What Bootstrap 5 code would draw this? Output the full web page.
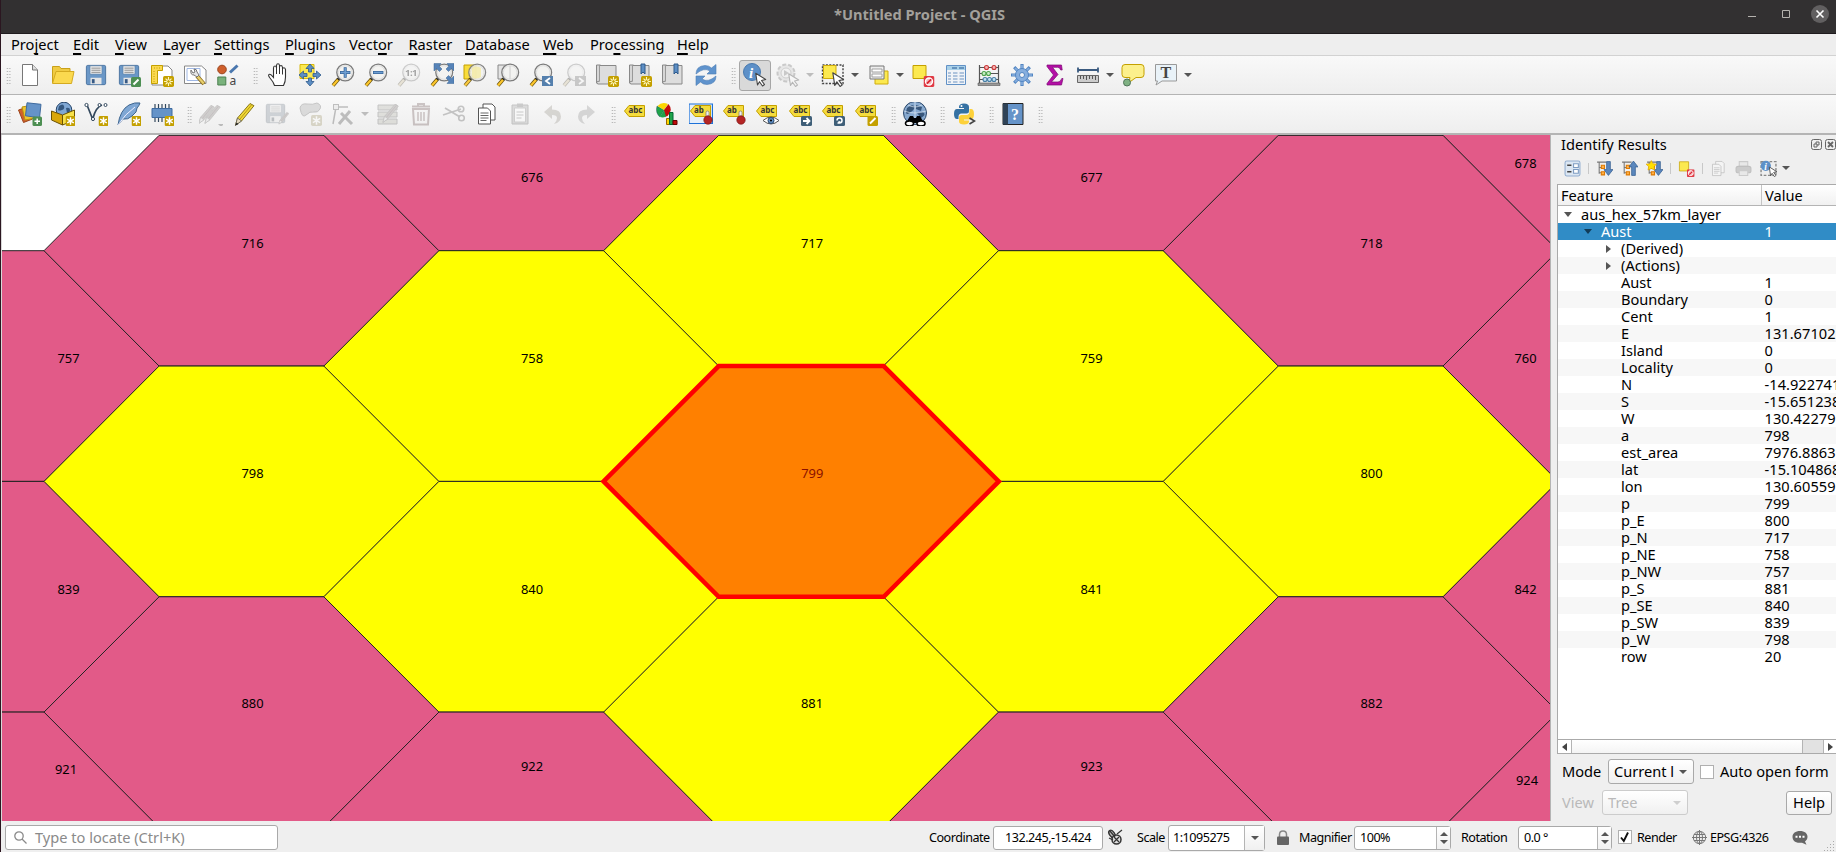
<!DOCTYPE html>
<html lang="en">
<head>
<meta charset="utf-8">
<title>*Untitled Project - QGIS</title>
<link href="https://cdn.jsdelivr.net/npm/bootstrap@5.3.0/dist/css/bootstrap.min.css" rel="stylesheet">
<script src="https://cdn.jsdelivr.net/npm/bootstrap@5.3.0/dist/js/bootstrap.bundle.min.js"></script>
<style>
body{width:1836px;height:852px;overflow:hidden;background:#efefef;color:#000;font-family:"Noto Sans","Open Sans",sans-serif;font-size:14.6px;line-height:17px;border-left:1px solid #2b1620}
.titlebar{height:34px;background:#323031;border-bottom:1px solid #1f1b1e;color:#a3a09b;font-weight:700;padding-bottom:5px}
.titlebar .lab{padding-top:1px}
.menus{height:22px;border-bottom:1px solid #d2d2d2;padding-left:10px;background:#eee}
.menus u{text-underline-offset:3px;text-decoration-thickness:1.5px;text-decoration-skip-ink:none}
.tools{height:39px;background:linear-gradient(#f9f9f9,#eee);border-bottom:1px solid #b4b4b4}
.tools.last-row{height:40px;border-bottom-width:2px}
.cell{width:33px;height:32px;flex:none;display:flex;align-items:center;justify-content:center}
.cell svg{width:24px;height:24px;overflow:visible}
.cell.pressed{width:32px;height:31px;margin-right:1px;background:#d9d9d9;border:1px solid #a6a6a6;border-radius:3px}
.cell.off{opacity:.34;filter:grayscale(.75)}
.drop{width:12px;flex:none;display:flex;padding-left:1px}
.drop::after,.tri{content:"";border:4px solid transparent;border-top:4.5px solid #555;border-bottom:0}
.drop.off{opacity:.35}
.grip{width:16px;flex:none;height:17px;display:flex;justify-content:flex-end;padding-right:3px}
.grip::after{content:"";width:5px;height:17px;background:radial-gradient(circle,#aaa 0.7px,transparent 0.9px) 0 0/2.6px 3px}
.grip.first{width:12.5px}
.mapview{width:1549px;height:686px;border-left:1px solid #d8d8d8;flex:none}
.side{width:286px;border-left:1px solid #b4b4b4;flex:none;overflow:hidden}
.mini .cell{width:25px;height:24px}
.mini .cell svg{width:17px;height:17px}
.sep{width:7px;display:flex;justify-content:center}
.sep::after{content:"";width:1px;height:11px;background:#c8c8c8}
.tree{margin-left:6px;width:300px;height:570px;border:1px solid #aaa;background:#fff}
.thead{height:21px;background:linear-gradient(#fff,#f1f1f1);border-bottom:1px solid #b4b4b4}
.thead div{padding:2px 0 0 3px}
.thead div:first-child{width:204px;border-right:1px solid #c4c4c4}
.trow{height:17px;display:flex;white-space:pre}
.trow:nth-child(even){background:#f7f7f7}
.trow.sel{background:#308cc6;color:#fff}
.trow .k{width:206.5px;flex:none;display:flex;align-items:center}
.trow .val{letter-spacing:.04px}
.tw{width:8px;margin-right:9px;display:flex;justify-content:center}
.tw i{border:4px solid transparent;border-top:5px solid #555;border-bottom:0}
.sel .tw i{border-top-color:#123c58}
.tw i.shut{border:4px solid transparent;border-left:5px solid #555;border-right:0}
.hscroll{height:14px;border-top:1px solid #aaa}
.hscroll div{height:13px}
.box{background:#fff;border:1px solid #a9a9a9;border-radius:3px;display:flex;align-items:center;flex:none}
.combo{background:linear-gradient(#fff,#f0f0f0);border:1px solid #a9a9a9;border-radius:3px;display:flex;align-items:center;flex:none}
.off-text{color:#b9b9b9}
.status{height:31px;font-size:12.6px;letter-spacing:-.5px;padding:2px 0 0 4px}
.status>*{flex:none}
.locator{font-size:14.6px;letter-spacing:0;color:#8a8a8a}
.spinb{width:14px;height:100%;border-left:1px solid #b4b4b4;background:linear-gradient(#fff,#f0f0f0);display:flex;flex-direction:column;align-items:center;justify-content:center;gap:4px;margin-left:auto}
.spinb i{border:4px solid transparent;border-top:4px solid #555;border-bottom:0}
.spinb i.up{transform:rotate(180deg)}
.chk{width:14px;height:14px;border:1px solid #b0b0b0;background:#fff;flex:none}
.lab{white-space:nowrap}
</style>
</head>
<body class="d-flex flex-column">
<svg width="0" height="0" class="position-absolute">
<defs>
<symbol id="star" viewBox="0 0 10 10"><rect width="10" height="10" rx="1.5" fill="#c4a000"/><path d="M5 1.2v7.6M1.7 3.1l6.6 3.8M8.3 3.1L1.7 6.9" stroke="#fff" stroke-width="1.4"/></symbol>
<symbol id="sun" viewBox="0 0 10 10"><rect width="10" height="10" rx="1.5" fill="#c4a000"/><path d="M5 1v8M1 5h8M2.3 2.3l5.4 5.4M7.7 2.3L2.3 7.7" stroke="#fff8c0" stroke-width="1"/><circle cx="5" cy="5" r="1.6" fill="#c4a000" stroke="#fff8c0" stroke-width=".8"/></symbol>
<symbol id="lens" viewBox="0 0 24 24"><path d="M7.5 16L2 22.5" stroke="#6b5510" stroke-width="3.6"/><path d="M7 16.8L2 22.4" stroke="#fcc62c" stroke-width="2.2"/><path d="M9 14.5l-2 2" stroke="#222" stroke-width="3"/><circle cx="14.2" cy="9.5" r="8.4" fill="#f3f3f1" stroke="#7c7c7c" stroke-width="1.3"/><circle cx="14.2" cy="9.5" r="6.8" fill="none" stroke="#dedede"/></symbol>
<symbol id="floppy" viewBox="0 0 24 24"><path d="M3 1.5h18q1.5 0 1.5 1.5v18q0 1.500-1.500 1.500H3q-1.500 0-1.500-1.500V3q0-1.500 1.500-1.500z" fill="#6a97c7" stroke="#46719f"/><path d="M5.500 2h13v9h-13z" fill="#eee" stroke="#55799f" stroke-width=".6"/><path d="M7 4.500h10M7 6.800h10M7 9.100h10" stroke="#888"/><path d="M6 15h12v7H6z" fill="#e6e6e6"/><path d="M7.500 16.500h3v4.500h-3z" fill="#375a86"/></symbol>
<symbol id="cur" viewBox="0 0 12 14"><path d="M.7.7l10 6.300-4.200 1 3 4-2 1.500-3-4.300-2 3.300z" fill="#fff" stroke="#444" stroke-width="1.100" stroke-linejoin="round"/></symbol>
<symbol id="tag" viewBox="0 0 24 24"><path d="M1.500 9L6 3.500h15.500v11H6z" fill="#f5dc3d" stroke="#c4a000"/><text x="5.500" y="11.300" font-size="8" font-weight="700" font-family="Noto Sans" fill="#333" textLength="14">abc</text></symbol>
<symbol id="tag2" viewBox="0 0 24 24"><path d="M1.500 9L6 3.500h15.500v11H6z" fill="#f5dc3d" stroke="#c4a000"/><text x="5" y="11.300" font-size="8" font-weight="700" font-family="Noto Sans" fill="#333">ab</text></symbol>
<symbol id="pin" viewBox="0 0 10 14"><rect x="3" y=".5" width="3" height="7" rx="1.500" fill="#eee" stroke="#777" stroke-width=".7"/><circle cx="5" cy="9.500" r="4.200" fill="#b52525" stroke="#7d1414" stroke-width=".7"/></symbol>
<symbol id="nosel" viewBox="0 0 10 10"><rect width="10" height="10" rx="1.500" fill="#e03a44"/><circle cx="5" cy="5" r="3.200" fill="#f6b9bd" stroke="#fff" stroke-width="1.200"/><path d="M3 7l4-4" stroke="#d8232f" stroke-width="1.500"/></symbol>
<symbol id="pencil" viewBox="0 0 24 24"><path d="M18 1.500l4 2.200L9.500 19l-6 4.200L5.500 16z" fill="#f0d838" stroke="#7c6a10" stroke-width=".9"/><path d="M19.800 2.600L7.500 17.600" stroke="#b89b14" stroke-width="1"/><path d="M5.500 16l4 3-6 4.200z" fill="#e8dcc0" stroke="#555" stroke-width=".7"/><path d="M4.500 20.500l2 1.400-3.200 1.800z" fill="#222"/></symbol>
<symbol id="darkpencil" viewBox="0 0 24 24"><path d="M18 1.500l4 2.200L9.500 19l-6 4.200L5.500 16z" fill="#a08080" stroke="#665" stroke-width=".9"/><path d="M19.800 2.600L7.500 17.600" stroke="#755" stroke-width="1"/><path d="M5.500 16l4 3-6 4.200z" fill="#ddd" stroke="#555" stroke-width=".7"/></symbol>
<symbol id="doc" viewBox="0 0 24 24"><path d="M1.500 2h4v18h-4z" fill="#d6d6d6" stroke="#888"/><path d="M4.500 2.500H21v18.500H3q-1.500-.5-1.500-2l3-1z" fill="#ddd" stroke="#888"/><path d="M4.500 2.500v16" stroke="#999"/></symbol>

<symbol id="new" viewBox="0 0 24 24"><path d="M4.500 1.500h10l5 5.500v15.500h-15z" fill="#fff" stroke="#777"/><path d="M14.500 1.500V7h5" fill="#ddd" stroke="#777"/></symbol>
<symbol id="open" viewBox="0 0 24 24"><path d="M1.500 20V3.500h7l1.500 2h9v3" fill="#f0cb43" stroke="#c9a11a"/><path d="M1.500 20.500L5 8.500h18L20.500 20.500z" fill="#fbd94f" stroke="#d4aa20"/></symbol>
<symbol id="save" viewBox="0 0 24 24"><use href="#floppy" x="1" y="0" width="22" height="24"/></symbol>
<symbol id="saveas" viewBox="0 0 24 24"><use href="#floppy" x="1" y="0" width="22" height="24"/><rect x="14" y="14" width="10" height="10" rx="1.500" fill="#4d8f53"/><path d="M16.500 21.500l5-5" stroke="#fff" stroke-width="2"/></symbol>
<symbol id="layout" viewBox="0 0 24 24"><path d="M2 3h16l4 4v15H2z" fill="#fff" stroke="#888"/><path d="M1.500 2.500h11v5h-5v13h-6z" fill="#fbd94f" stroke="#c4a000"/><path d="M4 5h7M4 8v11" stroke="#c4a000" stroke-dasharray="1 1.500"/><use href="#sun" x="13" y="13" width="11" height="11"/></symbol>
<symbol id="style" viewBox="0 0 24 24"><path d="M1.500 3h17l4.500 4v13.500H1.500z" fill="#fff" stroke="#888"/><path d="M4 5.500h13v12H4z" fill="none" stroke="#9fb7e4"/><path d="M14 13l7 8" stroke="#8a6b1c" stroke-width="4"/><path d="M14.500 13.500l6.200 7" stroke="#e8cf6c" stroke-width="2.400"/><path d="M8 7q-1 5 3 5l3 2 2-2-2-3q0-3-3-3l1 3-2 1z" fill="#e6e6e6" stroke="#777"/></symbol>
<symbol id="shapes" viewBox="0 0 24 24"><circle cx="6" cy="6.500" r="4.300" fill="#cf5f2c" stroke="#9b451d"/><path d="M14 9.500l7.500-7" stroke="#4a77ae" stroke-width="3"/><path d="M1.800 14h8v8h-8z" fill="#79b27c" stroke="#4a7f4e"/><text x="13.500" y="22" font-size="12" font-family="Noto Sans" fill="#444">a</text></symbol>
<symbol id="hand" viewBox="0 0 24 24"><path d="M8 22.500Q7 19 3.500 15q-2.200-3-1-3.600 1.500-.8 4.500 3V5q0-2 1.500-2t1.500 2V2.500Q10.200.8 11.500.8T13 2.500V4q.3-1.500 1.500-1.500T16 4.500V6q.3-1.300 1.400-1.300T19 6.500V14q0 5-2 8.500z" fill="#fff" stroke="#333" stroke-width="1.100" transform="translate(1.500 0)"/><path d="M11.500 5v6M14.500 4v7M17.500 6v5.500" stroke="#333"/></symbol>
<symbol id="pansel" viewBox="0 0 24 24"><path d="M2 1.500h14v14H2z" fill="#fce94f" stroke="#d8b90e"/><path d="M12 1l4 4.500h-2.500V9h-3V5.500H8zM12 23l4-4.500h-2.500V15h-3v3.500H8zM1 12l4.500-4v2.500H9v3H5.500V16zM23 12l-4.500-4v2.500H15v3h3.500V16z" fill="#5d8ec4" stroke="#2f5a8c" stroke-width=".8"/></symbol>
<symbol id="zin" viewBox="0 0 24 24"><use href="#lens" width="24" height="24"/><path d="M14.200 4.300v10.400M9 9.500h10.400" stroke="#38669a" stroke-width="3"/><path d="M14.200 5v9M9.700 9.500h9" stroke="#6f9fd2" stroke-width="1.500"/></symbol>
<symbol id="zout" viewBox="0 0 24 24"><use href="#lens" width="24" height="24"/><path d="M9 9.500h10.400" stroke="#38669a" stroke-width="3"/><path d="M9.700 9.500h9" stroke="#6f9fd2" stroke-width="1.500"/></symbol>
<symbol id="z11" viewBox="0 0 24 24"><use href="#lens" width="24" height="24"/><text x="8" y="13" font-size="9.500" font-weight="700" font-family="Noto Sans" textLength="12.500">1:1</text></symbol>
<symbol id="zfull" viewBox="0 0 24 24"><use href="#lens" width="24" height="24"/><path d="M4 .5h7L9 3l3 3-2.500 2.500-3-3L4 8zM24 .5h-7L19 3l-3 3 2.500 2.500 3-3L24 8zM24 20.500h-7l2-2.500-3-3 2.500-2.500 3 3 2.500-2.500z" fill="#5683b8" stroke="#3a6697" stroke-width=".5"/></symbol>
<symbol id="zsel" viewBox="0 0 24 24"><path d="M1 2h12v14H1z" fill="#f8dc3a" stroke="#c4a000"/><g opacity=".9"><use href="#lens" width="24" height="24"/></g><path d="M9 5q5-3 9 0v9q-5 3-9 0z" fill="#f4ea9a" opacity=".7"/></symbol>
<symbol id="zlay" viewBox="0 0 24 24"><path d="M2 2h12v14H2z" fill="#e4e4e4" stroke="#888"/><use href="#lens" width="24" height="24"/><path d="M14 3v13" stroke="#ccc"/></symbol>
<symbol id="zlast" viewBox="0 0 24 24"><use href="#lens" width="24" height="24"/><path d="M13 13h11v10H13z" fill="#5580ad"/><path d="M21 15l-4 3 4 3" stroke="#fff" stroke-width="1.800" fill="none"/></symbol>
<symbol id="znext" viewBox="0 0 24 24"><use href="#lens" width="24" height="24"/><path d="M13 13h11v10H13z" fill="#777"/><path d="M17 15l4 3-4 3" stroke="#fff" stroke-width="1.800" fill="none"/></symbol>
<symbol id="newmap" viewBox="0 0 24 24"><use href="#doc" width="24" height="24"/><use href="#sun" x="13" y="13" width="11" height="11"/></symbol>
<symbol id="bmnew" viewBox="0 0 24 24"><use href="#doc" width="24" height="24"/><path d="M13 1h4v10l-2-2-2 2z" fill="#5d8ec4" stroke="#2f5a8c"/><use href="#sun" x="13" y="13" width="11" height="11"/></symbol>
<symbol id="bm" viewBox="0 0 24 24"><use href="#doc" width="24" height="24"/><path d="M13 1h4v10l-2-2-2 2z" fill="#5d8ec4" stroke="#2f5a8c"/></symbol>
<symbol id="refresh" viewBox="0 0 24 24"><path d="M2 11Q2 3 11 2.500q4 0 6.500 2.500L22 1.500V11h-9l3-3q-6-4-14 3z" fill="#5f93cd" stroke="#4b7cb3" stroke-width=".6"/><path d="M22 13q0 8-9 8.500-4 0-6.500-2.500L2 22.500V13h9l-3 3q6 4 14-3z" fill="#5f93cd" stroke="#4b7cb3" stroke-width=".6"/></symbol>
<symbol id="ident" viewBox="0 0 24 24"><circle cx="9" cy="9" r="8.500" fill="#5d90c8" stroke="#4878ad"/><text x="6" y="14.500" font-size="15" font-style="italic" font-weight="700" font-family="Liberation Serif" fill="#fff">i</text><use href="#cur" x="12" y="9" width="12" height="15"/></symbol>
<symbol id="action" viewBox="0 0 24 24"><circle cx="10" cy="10" r="8.500" fill="#ccc" stroke="#777" stroke-width="2" stroke-dasharray="4 2"/><circle cx="10" cy="10" r="5" fill="#eee" stroke="#888"/><path d="M8 7l5 3-5 3z" fill="#777"/><use href="#cur" x="12" y="10" width="12" height="14"/></symbol>
<symbol id="selr" viewBox="0 0 24 24"><path d="M1.500 2h20.500v18.500H1.500z" fill="none" stroke="#444" stroke-width="1.400" stroke-dasharray="2 1.400"/><path d="M2.500 2.500h12.500v13h-12.500z" fill="#fce94f" stroke="#d0ac0c"/><use href="#cur" x="11" y="9" width="13" height="15"/></symbol>
<symbol id="self" viewBox="0 0 24 24"><path d="M9 8h13v13H9z" fill="#fce94f" stroke="#d0ac0c"/><path d="M4 3h14v13H4z" fill="#eee" stroke="#777"/><path d="M6 6h10v3H6zM6 11h10v3H6z" fill="#fff" stroke="#999" stroke-width=".9"/></symbol>
<symbol id="desel" viewBox="0 0 24 24"><path d="M2 2.500h13v13H2z" fill="#fce94f" stroke="#c4a000"/><use href="#nosel" x="12.500" y="13" width="11" height="11"/></symbol>
<symbol id="table" viewBox="0 0 24 24"><path d="M2.500 2.500h19v19h-19z" fill="#f0f3f7" stroke="#6191c6"/><path d="M3 3h18v4H3z" fill="#a8d0e8"/><path d="M8 5h5M15 5h5" stroke="#4f7fb0" stroke-width="1.400"/><path d="M4 10h3M9 10h4.500M15.500 10h4.500M4 13h3M9 13h4.500M15.500 13h4.500M4 16h3M9 16h4.500M15.500 16h4.500M4 19h3M9 19h4.500M15.500 19h4.500" stroke="#6c94c2" stroke-width="1.200"/></symbol>
<symbol id="abacus" viewBox="0 0 24 24"><path d="M2.500 2v18M21.500 2v18M2.500 4.500h19M2.500 10.500h19M2.500 16.500h19" stroke="#555" stroke-width="1.200"/><path d="M1 20h22v2.500H1z" fill="#999" stroke="#555" stroke-width=".6"/><g stroke-width="1.100"><g fill="#f6b3b3" stroke="#c93838"><circle cx="9.500" cy="4.500" r="2"/><circle cx="17" cy="4.500" r="2"/></g><g fill="#c7ecc7" stroke="#4ca34c"><circle cx="7" cy="10.500" r="2"/><circle cx="11.500" cy="10.500" r="2"/></g><g fill="#bfe0f2" stroke="#477ea5"><circle cx="8" cy="16.500" r="2"/><circle cx="12.500" cy="16.500" r="2"/><circle cx="17" cy="16.500" r="2"/></g></g></symbol>
<symbol id="gear" viewBox="0 0 24 24"><path d="M12 1v22M1 12h22M4.200 4.200l15.600 15.600M19.800 4.200L4.200 19.800" stroke="#5285c2" stroke-width="3.200"/><path d="M12 2v20M2 12h20M5 5l14 14M19 5L5 19" stroke="#86aede" stroke-width="1.700"/><circle cx="12" cy="12" r="6.500" fill="#86aede" stroke="#5285c2"/><circle cx="12" cy="12" r="2.500" fill="#f6f6f6" stroke="#5285c2"/></symbol>
<symbol id="sigma" viewBox="0 0 24 24"><path d="M4 2h14.500l.7 5h-1.500q-.7-2.700-3-2.700H9.500L15 11.500 8.500 19h6.500q2.500 0 3.800-3.500h1.200L18.500 22H4v-1.500L10.500 12 4 3.500z" fill="#b40fa6" stroke="#7c0b73" stroke-width=".7"/></symbol>
<symbol id="ruler" viewBox="0 0 24 24"><path d="M2 7h20M2 4.500v5M22 4.500v5" stroke="#3b5b80" stroke-width="1.800"/><path d="M1.500 12.500h21v7h-21z" fill="#ccc" stroke="#666"/><path d="M4.500 13v3M7.500 13v3M10.500 13v4M13.500 13v3M16.500 13v3M19.500 13v4" stroke="#555"/></symbol>
<symbol id="tip" viewBox="0 0 24 24"><path d="M4 1.500h16q3 0 3 3v7q0 3-3 3h-5l-7 5 1-5H4q-3 0-3-3v-7q0-3 3-3z" fill="#fcf08c" stroke="#c4a000"/><circle cx="6" cy="19.500" r="3.500" fill="#7fb183" stroke="#51755a"/></symbol>
<symbol id="textann" viewBox="0 0 24 24"><path d="M1.500 1.500h21V18H8l-6 4 1.500-4h-2z" fill="#e9f2f8" stroke="#999"/><text x="6.500" y="15" font-size="16" font-family="Liberation Serif" font-weight="700" fill="#444">T</text></symbol>

<symbol id="layers" viewBox="0 0 24 24"><path d="M.5 8l9-3 5 12-9 3.500z" fill="#cf5f2c" stroke="#9b451d"/><path d="M4 5l11-2 3 13-11 2z" fill="#edc531" stroke="#b9920d"/><path d="M9 .800l14 1.500-1.500 13.500-14-2z" fill="#6593c8" stroke="#3f6b9f"/><rect x="14.500" y="14.500" width="9.500" height="9.500" rx="1.500" fill="#4d8f53"/><path d="M19.200 16.500v5.500M16.500 19.200h5.500" stroke="#fff" stroke-width="1.500"/></symbol>
<symbol id="gpkg" viewBox="0 0 24 24"><circle cx="13" cy="8" r="7.800" fill="#7fa7d4" stroke="#27466b"/><path d="M8 4q4-3 5 0t-2 4-4 0zM15 6q4-1 4 2t-3 3z" fill="#34577f"/><path d="M.5 9l11 4v10l-11-5z" fill="#d9a70a" stroke="#6b5204"/><path d="M11.500 13L23.500 8v10l-12 5z" fill="#f7e14b" stroke="#6b5204"/><use href="#star" x="14.500" y="14" width="10" height="10"/></symbol>
<symbol id="vec" viewBox="0 0 24 24"><path d="M3 3l6 15M9 16q3-11 9-13" stroke="#34495e" stroke-width="1.700" fill="none"/><g fill="#fff" stroke="#34495e"><circle cx="2.500" cy="3" r="1.600"/><circle cx="9" cy="17" r="1.600"/><circle cx="15.500" cy="3" r="1.500"/><circle cx="21.500" cy="3" r="1.500"/></g><use href="#star" x="14.500" y="14" width="10" height="10"/></symbol>
<symbol id="feather" viewBox="0 0 24 24"><path d="M1 23Q3 8 12 3q6-3 11-2-1 3-3 5l-1 4-4 4q-4 4-9 3z" fill="#7fa7d4" stroke="#3d658f"/><path d="M1 23Q8 12 18 5" stroke="#eef" fill="none"/><use href="#star" x="14.500" y="14" width="10" height="10"/></symbol>
<symbol id="chip" viewBox="0 0 24 24"><path d="M5 2v18M8.500 2v18M12 2v18M15.500 2v14M19 2v14" stroke="#34495e" stroke-width="1.200"/><path d="M2 6.500h20v9H2z" fill="#6593c8" stroke="#3f6b9f"/><use href="#star" x="14.500" y="14" width="10" height="10"/></symbol>
<symbol id="pencils" viewBox="0 0 24 24"><use href="#darkpencil" x="-3" y="0" width="20" height="24"/><use href="#darkpencil" x="3" y="0" width="20" height="24"/><path d="M19 22h6l-3 3z" fill="#555"/></symbol>
<symbol id="savee" viewBox="0 0 24 24"><use href="#floppy" x="0" y="1" width="21" height="21"/><use href="#darkpencil" x="12" y="9" width="13" height="14"/></symbol>
<symbol id="blob" viewBox="0 0 24 24"><path d="M2 6q1-5 7-4t10-1q5 2 3 6t-6 3-8 3-6-7z" fill="#aaa" stroke="#666"/><use href="#star" x="13" y="13" width="11" height="11"/></symbol>
<symbol id="vtx" viewBox="0 0 24 24"><path d="M5 5L2 22M5 5h12" stroke="#555" stroke-width="1.500"/><rect x="2.500" y="2.500" width="5" height="5" fill="#ddd" stroke="#555"/><path d="M10 11l11 11M19 9L8 22" stroke="#555" stroke-width="3"/></symbol>
<symbol id="attr" viewBox="0 0 24 24"><path d="M2 3h19v5H2zM2 10h19v5H2zM2 17h19v5H2z" fill="#b9b994" stroke="#666"/><use href="#darkpencil" x="4" y="0" width="20" height="22"/></symbol>
<symbol id="trash" viewBox="0 0 24 24"><path d="M4 7h16l-1 15.500H5zM3 4.500h18M9 4V2h6v2" fill="none" stroke="#a55" stroke-width="2"/><path d="M9 10v9M12 10v9M15 10v9" stroke="#a55" stroke-width="1.500"/></symbol>
<symbol id="cut" viewBox="0 0 24 24"><path d="M1 13L19 7M3 6l15 9" stroke="#666" stroke-width="1.800"/><circle cx="19" cy="7" r="2.800" fill="none" stroke="#666" stroke-width="1.600"/><circle cx="19.500" cy="16" r="2.800" fill="none" stroke="#666" stroke-width="1.600"/></symbol>
<symbol id="copy" viewBox="0 0 24 24"><path d="M8 2h9l3 3v13H8z" fill="#fff" stroke="#555"/><path d="M3.500 6h9l3 3v13h-12z" fill="#fff" stroke="#555"/><path d="M5.500 11h8M5.500 13.500h8M5.500 16h8M5.500 18.500h6" stroke="#666"/></symbol>
<symbol id="paste" viewBox="0 0 24 24"><path d="M4 3h16v19H4z" fill="#aaa" stroke="#666"/><path d="M6.500 6h11v14h-11z" fill="#fff" stroke="#888"/><path d="M9 1.500h6V5H9z" fill="#777"/><path d="M8.500 10h7M8.500 13h7M8.500 16h5" stroke="#777"/></symbol>
<symbol id="undo" viewBox="0 0 24 24"><path d="M3 10l8-7v4.500q9 0 9 7 0 6-7 7.500 3-3 3-6t-5-3V17z" fill="#a97"/></symbol>
<symbol id="redo" viewBox="0 0 24 24"><path d="M21 10l-8-7v4.500q-9 0-9 7 0 6 7 7.500-3-3-3-6t5-3V17z" fill="#999"/></symbol>
<symbol id="pie" viewBox="0 0 24 24"><path d="M8 8L1 4Q-1 11 4 15z" fill="#1fa34a" stroke="#115"  stroke-width=".3"/><path d="M8 8L1.500 4Q6-1 12 2z" fill="#fbd500"/><path d="M8 8l4.500-6q5 6-1 12l-3 1z" fill="#c00a0a"/><path d="M8 8l-4 7q3 1 6-.5z" fill="#1fa34a"/><path d="M10.500 16.500h3v6h-3z" fill="#fbd500" stroke="#960"/><path d="M13.500 10.500h3.500v12h-3.500z" fill="#1fa34a" stroke="#063"/><path d="M17 18.500h4v4h-4z" fill="#c00a0a" stroke="#600"/></symbol>
<symbol id="lab1" viewBox="0 0 24 24"><use href="#tag" width="24" height="24"/></symbol>
<symbol id="lab2" viewBox="0 0 24 24"><path d="M0 2h23.500v19.500H0z" fill="#e4eefa" stroke="#1c71d8" stroke-width="1.200"/><use href="#tag2" width="24" height="24"/><use href="#pin" x="14" y="8" width="10" height="15"/></symbol>
<symbol id="lab3" viewBox="0 0 24 24"><use href="#tag2" width="24" height="24"/><use href="#pin" x="14" y="8" width="10" height="15"/></symbol>
<symbol id="lab4" viewBox="0 0 24 24"><use href="#tag" width="24" height="24"/><path d="M8 18.500q8-7 16 0-8 7-16 0z" fill="#fff" stroke="#555"/><circle cx="16" cy="18.500" r="3" fill="#6593c8" stroke="#27466b"/><circle cx="16" cy="18.500" r="1"/></symbol>
<symbol id="lab5" viewBox="0 0 24 24"><use href="#tag" width="24" height="24"/><rect x="13" y="14" width="11" height="10" rx="1.500" fill="#3f5f78"/><path d="M15 19h6M18.500 16l3 3-3 3" stroke="#fff" stroke-width="1.800" fill="none"/></symbol>
<symbol id="lab6" viewBox="0 0 24 24"><use href="#tag" width="24" height="24"/><rect x="13" y="14" width="11" height="10" rx="1.500" fill="#3f5f78"/><path d="M16 18.500q0-2.500 2.500-2.500t2.500 2.500-2.500 2.500h-2M20 21l-2.500-1.500" stroke="#fff" stroke-width="1.500" fill="none"/></symbol>
<symbol id="lab7" viewBox="0 0 24 24"><use href="#tag" width="24" height="24"/><rect x="13.500" y="14" width="10.500" height="10" rx="1.500" fill="#c4a000"/><path d="M16 21.500l5.500-5.500" stroke="#fff" stroke-width="2"/></symbol>
<symbol id="csw" viewBox="0 0 24 24"><circle cx="12" cy="11" r="11.500" fill="#87a9cf" stroke="#2a4668"/><path d="M4 6q5-4 7-2t-3 6-5 0zM13 3l6 2-1 4-5-2zM14 11q5-2 7 0t-3 5z" fill="#38577c"/><path d="M12 0v22M1 9q11 4 22 0M5 3q7 4 14 0" stroke="#dde8f4" fill="none" stroke-width=".7"/><path d="M3 21l4-7h3l1 2h2l1-2h3l4 7z" fill="#000"/><ellipse cx="6.500" cy="21.500" rx="4" ry="2.500" fill="#fff" stroke="#000" stroke-width="1.600"/><ellipse cx="18" cy="21.500" rx="4" ry="2.500" fill="#fff" stroke="#000" stroke-width="1.600"/></symbol>
<symbol id="python" viewBox="0 0 24 24"><path d="M7 5q0-3.500 5-3.500t5 3.500v4q0 2.500-2.500 2.500h-5Q6.500 11.500 6.500 15v2H5q-3 0-3-5t3-5h7V6H7z" fill="#3571a3"/><circle cx="9.500" cy="4" r="1" fill="#fff"/><path d="M17.500 7H19q3 0 3 5t-3 5.500h-7v1h5v1q0 3-5 3t-5-3v-4Q7 13 9.500 13h5q3 0 3-4z" fill="#fdd13b"/><path d="M17.500 16l5 3-5 3" stroke="#444" stroke-width="1.600" fill="none"/></symbol>
<symbol id="help" viewBox="0 0 24 24"><path d="M2 1.500h20v21H2z" fill="#6593c8" stroke="#222"/><path d="M2 1.500h5v21H2z" fill="#2f4256"/><text x="10" y="17.500" font-size="16" font-family="Liberation Serif" font-weight="700" fill="#fff">?</text></symbol>

<symbol id="p-form" viewBox="0 0 16 16"><rect x="1" y="1" width="14" height="14" rx="1.500" fill="#dbe6f2" stroke="#93aed0"/><path d="M3 5h4M3 11h4" stroke="#444" stroke-width="1.300"/><path d="M9 3.500h4.500v3.500H9zM9 9h4.500v3.500H9z" fill="#fff" stroke="#7e9cc2"/></symbol>
<symbol id="p-base" viewBox="0 0 16 16"><path d="M1 2h9M3 2v11M3 7h4M3 12h4" stroke="#777" fill="none"/><path d="M5 5h3v3H5zM5 11h3v3H5z" fill="#ffb04a" stroke="#e07b00"/></symbol>
<symbol id="p-exp" viewBox="0 0 16 16"><use href="#p-base" width="16" height="16"/><path d="M10 1.500h3.500V9H16l-4.300 5.500L7.500 9H10z" fill="#5b87bd" stroke="#355f90" stroke-width=".7"/></symbol>
<symbol id="p-col" viewBox="0 0 16 16"><use href="#p-base" width="16" height="16"/><path d="M10 14.500h3.500V6.500H16L11.700 1 7.500 6.500H10z" fill="#5b87bd" stroke="#355f90" stroke-width=".7"/></symbol>
<symbol id="p-new" viewBox="0 0 16 16"><use href="#p-exp" width="16" height="16"/><path d="M5 .5l1.500 3 3.500.4-2.500 2.300.6 3.300L5 8 1.900 9.500l.6-3.300L0 3.900l3.500-.4z" fill="#ffe100" stroke="#e0a000" stroke-width=".6"/></symbol>
<symbol id="p-print" viewBox="0 0 16 16"><path d="M4 1.500h8V6H4z" fill="#ddd" stroke="#888"/><rect x="1" y="6" width="14" height="6" rx="2" fill="#888" stroke="#666"/><path d="M4 10h8v4.500H4z" fill="#ddd" stroke="#888"/></symbol>
<symbol id="p-id" viewBox="0 0 16 16"><path d="M1 1.500h14v13H1z" fill="none" stroke="#888" stroke-width="1.300" stroke-dasharray="2.500 1.500"/><circle cx="5.500" cy="5.500" r="4.800" fill="#5d90c8"/><text x="4" y="9" font-size="9" font-style="italic" font-weight="700" font-family="Liberation Serif" fill="#fff">i</text><use href="#cur" x="8" y="6" width="9" height="10"/></symbol>
</defs>
</svg>

<header class="titlebar d-flex align-items-center flex-shrink-0">
  <div class="lab" style="margin-left:833px;width:170px">*Untitled Project - QGIS</div>
  <svg class="ms-auto" width="92" height="26" viewBox="0 0 92 26" fill="none" stroke="#b5b2ae"><path d="M4 15.500h8"/><path d="M38.500 9.500h7v7h-7z"/><circle cx="76" cy="13" r="9" fill="#615f60" stroke="none"/><path d="M72.500 9.500l7 7M79.500 9.500l-7 7" stroke="#fff" stroke-width="1.600"/></svg>
</header>
<nav class="menus d-flex align-items-center flex-shrink-0" id="menus"></nav>
<div class="tools d-flex align-items-center flex-shrink-0" id="tb1"></div>
<div class="tools last-row d-flex align-items-center flex-shrink-0" id="tb2"></div>

<main class="d-flex flex-shrink-0">
  <svg class="mapview" id="map" viewBox="2 135 1548 686" font-family="Noto Sans" font-size="12.900" text-anchor="middle"></svg>
  <aside class="side">
    <div class="d-flex align-items-center" style="height:19px;padding-left:10px"><span class="lab">Identify Results</span>
      <svg class="ms-auto" width="25" height="12" viewBox="0 0 25 12" fill="none" stroke="#666"><rect x=".5" y=".5" width="10" height="10" rx="2"/><path d="M3 5h3v3H3zM5 5V3h3v3H6"/><rect x="14.500" y=".5" width="10" height="10" rx="2"/><path d="M17 3l5 5M22 3l-5 5" stroke-width="1.800"/></svg></div>
    <div class="mini d-flex align-items-center" style="height:30px;padding:0 0 2px 9px" id="mini"></div>
    <div class="tree">
      <div class="thead d-flex"><div>Feature</div><div>Value</div></div>
      <div id="rows" style="height:533px"></div>
      <div class="hscroll d-flex"><div style="width:14px;border-right:1px solid #b4b4b4" class="d-flex align-items-center justify-content-center"><svg width="5" height="8"><path d="M5 0v8L0 4z" fill="#444"/></svg></div><div style="width:231px;border-right:1px solid #b4b4b4;background:linear-gradient(#fff,#f4f4f4)"></div><div style="width:21px;background:#e2e2e2;border-right:1px solid #b4b4b4"></div><div class="d-flex align-items-center ps-1"><svg width="5" height="8"><path d="M0 0v8l5-4z" fill="#444"/></svg></div></div>
    </div>
    <div class="d-flex align-items-center" style="margin-top:5px;height:25px;padding-left:11px">
      <span class="lab" style="width:46px">Mode</span>
      <div class="combo" style="width:86px;height:25px;padding:0 6px 0 5px">Current l<i class="tri ms-auto"></i></div>
      <div class="chk" style="margin:0 6px"></div><span class="lab">Auto open form</span>
    </div>
    <div class="d-flex align-items-center off-text" style="margin-top:6px;height:25px;padding-left:11px">
      <span class="lab" style="width:40px">View</span>
      <div class="combo" style="width:86px;height:25px;padding:0 6px 0 5px;border-color:#ccc">Tree<i class="tri ms-auto opacity-25"></i></div>
      <div class="combo text-black justify-content-center" style="width:46px;height:24px;margin-left:98px">Help</div>
    </div>
  </aside>
</main>

<footer class="status d-flex align-items-center flex-shrink-0">
  <div class="box locator" style="width:273px;height:25px;padding-left:8px"><svg width="13" height="13" viewBox="0 0 13 13" fill="none" stroke="#8a8a8a" stroke-width="1.300" style="margin-right:8px"><circle cx="5" cy="5" r="4.200"/><path d="M8 8l4.500 4.500"/></svg><span class="lab">Type to locate (Ctrl+K)</span></div>
  <span class="lab" style="margin-left:651px;width:64px">Coordinate</span>
  <div class="box justify-content-center" style="width:110px;height:24px">132.245,-15.424</div>
  <svg style="margin:0 13px 0 4px" width="17" height="17" viewBox="0 0 17 17" fill="none" stroke="#333"><ellipse cx="5" cy="5" rx="2.500" ry="4.200" transform="rotate(-35 5 5)" fill="#bbb" stroke-width="1.400"/><circle cx="9.500" cy="10.500" r="4.500" fill="#ddd" stroke-width="1.500"/><path d="M7 8l5 5M12 8l-5 5M2 9l4 2M10 5l5-4M3 2l5 6" stroke-width="1.200"/></svg>
  <span class="lab" style="width:31px">Scale</span>
  <div class="box" style="width:97px;height:26px;padding-left:4px">1:1095275<div class="h-100 d-flex align-items-center justify-content-center ms-auto" style="width:20px;border-left:1px solid #b4b4b4;background:linear-gradient(#fff,#f0f0f0)"><i class="tri"></i></div></div>
  <svg style="margin:0 10px 0 12px" width="12" height="15" viewBox="0 0 12 15"><path d="M2.500 7V4.500q0-3.500 3.500-3.500t3.500 3.500V7" fill="none" stroke="#888" stroke-width="1.500"/><rect y="6.500" width="12" height="8.500" rx="1" fill="#666"/></svg>
  <span class="lab" style="width:55px">Magnifier</span>
  <div class="box" style="width:97px;height:24px;padding-left:5px">100%<div class="spinb"><i class="up"></i><i></i></div></div>
  <span class="lab" style="margin-left:10px;width:57px">Rotation</span>
  <div class="box" style="width:94px;height:24px;padding-left:5px">0.0 °<div class="spinb"><i class="up"></i><i></i></div></div>
  <div class="chk" style="margin:0 5px 2px 6px"><svg class="d-block" width="12" height="12" viewBox="0 0 12 12"><path d="M2 6.500l2.800 3.500L9 1.500" fill="none" stroke="#111" stroke-width="1.900"/></svg></div>
  <span class="lab" style="width:55px">Render</span>
  <svg style="margin-right:3px" width="15" height="15" viewBox="0 0 15 15" fill="none" stroke="#777"><circle cx="7.500" cy="7.500" r="6.200"/><ellipse cx="7.500" cy="7.500" rx="3" ry="6.200"/><path d="M0 7.500h15M2 4.500h11M2 10.500h11M7.500 0v15"/></svg>
  <span class="lab" style="width:81px">EPSG:4326</span>
  <svg width="18" height="16" viewBox="0 0 18 16"><path d="M9 1c4.500 0 7.500 2.400 7.500 5.800 0 2-1 3.700-2.500 4.700l1.500 3.200-4.500-2c-7 1-9.500-2.500-9.500-5.900C1.500 3.400 4.500 1 9 1z" fill="#666"/><path d="M4.500 5.700h2v2h-2zM8 5.700h2v2H8zM11.500 5.700h2v2h-2z" fill="#fff"/></svg>
  <svg class="ms-auto align-self-end" width="12" height="12" fill="#aaa"><path d="M9 1h1v1H9zM6 4h1v1H6zM9 4h1v1H9zM3 7h1v1H3zM6 7h1v1H6zM9 7h1v1H9zM0 10h1v1H0zM3 10h1v1H3zM6 10h1v1H6zM9 10h1v1H9z"/></svg>
</footer>

<script>
const $=id=>document.getElementById(id);
// Menu entries: label with mnemonic, advance to the next entry
$('menus').innerHTML=[['Pro<u>j</u>ect',62],['<u>E</u>dit',42],['<u>V</u>iew',48],['<u>L</u>ayer',51],['<u>S</u>ettings',71],['<u>P</u>lugins',64],['Vect<u>o</u>r',59.5],['<u>R</u>aster',56.5],['<u>D</u>atabase',78],['<u>W</u>eb',47],['Pro<u>c</u>essing',87],['<u>H</u>elp',40]]
 .map(([t,w])=>`<span class="lab" style="width:${w}px">${t}</span>`).join('');
// Toolbars: "|" grip, "/" separator, "v" drop-down arrow, "-" disabled, "*" pressed
function bar(s){return s.split(' ').map((t,i)=>{
 if(t==='|')return `<span class="grip${i?'':' first'}"></span>`;
 if(t==='/')return '<span class="sep"></span>';
 if(t==='v')return '<span class="drop"></span>';
 if(t==='-v')return '<span class="drop off"></span>';
 const c=t[0]==='-'?' off':t[0]==='*'?' pressed':'';
 return `<span class="cell${c}"><svg><use href="#${c?t.slice(1):t}"/></svg></span>`;}).join('')}
$('tb1').innerHTML=bar('| new open save saveas layout style shapes | hand pansel zin zout -z11 zfull zsel zlay zlast -znext newmap bmnew bm refresh | *ident -action -v selr v self v desel table abacus gear sigma ruler v tip textann v');
$('tb2').innerHTML=bar('| layers gpkg vec feather chip | -pencils pencil -savee -blob -vtx -v -attr -trash -cut copy -paste -undo -redo | lab1 pie lab2 lab3 lab4 lab5 lab6 lab7 | csw | python | help |');
$('mini').innerHTML=bar('p-form / p-exp p-col p-new / desel / -copy -p-print p-id v');
// Identify results tree
const rows=[['aus_hex_57km_layer','',6,'open'],['Aust','1',26,'open'],['(Derived)','',46,'shut'],['(Actions)','',46,'shut'],...
 'Aust 1,Boundary 0,Cent 1,E 131.67102,Island 0,Locality 0,N -14.922741,S -15.651238,W 130.42279,a 798,est_area 7976.8863,lat -15.104868,lon 130.60559,p 799,p_E 800,p_N 717,p_NE 758,p_NW 757,p_S 881,p_SE 840,p_SW 839,p_W 798,row 20'.split(',').map(r=>[...r.split(' '),46,''])];
$('rows').innerHTML=rows.map(([k,v,x,a],i)=>`<div class="trow${i===1?' sel':''}"><span class="k" style="padding-left:${x}px"><span class="tw">${a?`<i class="${a}"></i>`:''}</span>${k}</span><span class="val">${v}</span></div>`).join('');
// Hexagon grid: column pitch 279.8, row pitch 230.7
const P='#e25a88',Y='#ff0',out=[];
const hex=(cx,cy)=>[[-197.6,0],[-82.5,-115.35],[82.5,-115.35],[197.6,0],[82.5,115.35],[-82.5,115.35]].map(p=>(cx+p[0])+','+(cy+p[1])).join(' ');
for(let c=-1;c<=5;c++)for(let r=-1;r<=3;r++){
 const odd=c&1,cx=241.6+279.8*c,cy=250.7+230.7*r+(odd?-115.35:0);
 if(c===-1&&r<1||c===0&&r<0)continue;
 const y=odd?((c===1||c===3)&&(r===1||r===2)):(c===2?r>=0&&r<=2:(c===0||c===4)&&r===1);
 out.push(`<polygon points="${hex(cx,cy)}" fill="${y?Y:P}" stroke="#232323"/>`);
}
out.push(`<polygon points="${hex(801.2,481.4)}" fill="#ff8000" stroke="#f00" stroke-width="4.5"/>`);
[[676,532,182],[677,1091.5,182],[678,1525.5,167.7],[716,252.5,247.7],[717,812,247.7],[718,1371.5,247.7],[757,68.5,362.8],[758,532,362.8],[759,1091.5,362.8],[760,1525.5,362.8],[798,252.5,478.3],[799,812.3,478.3],[800,1371.5,478.3],[839,68.5,594],[840,532,594],[841,1091.5,594],[842,1525.5,594],[880,252.5,707.5],[881,812,707.5],[882,1371.5,707.5],[921,66,773.8],[922,532,771],[923,1091.5,771],[924,1527,784.5]]
 .forEach(([t,x,y])=>out.push(`<text x="${x}" y="${y}" fill="${t===799?'#8a1000':'#000'}">${t}</text>`));
$('map').innerHTML=`<rect x="2" y="135" width="1548" height="686" fill="#fff"/>`+out.join('');
</script>
</body>
</html>
